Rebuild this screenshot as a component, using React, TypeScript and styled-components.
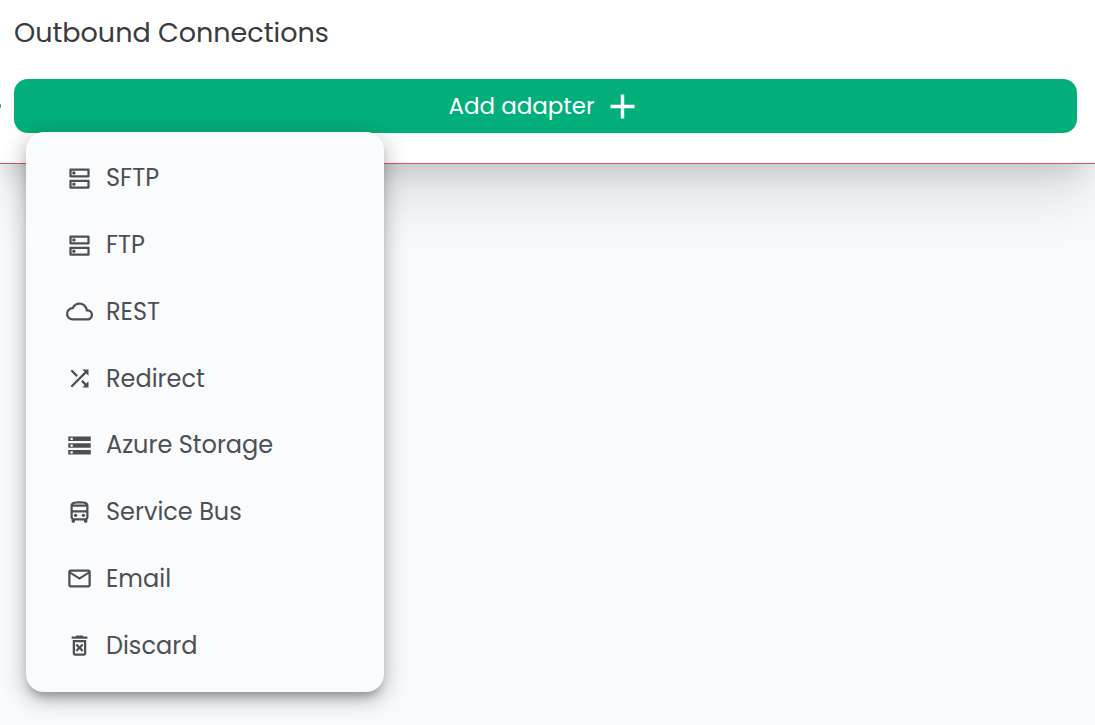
import React from 'react';
import styled, { createGlobalStyle } from 'styled-components';
import {
  MdAdd,
  MdOutlineCloud,
  MdOutlineDeleteForever,
  MdOutlineDirectionsBus,
  MdOutlineDns,
  MdOutlineMail,
  MdShuffle,
  MdStorage,
} from 'react-icons/md';
import type { IconType } from 'react-icons';

const GlobalStyle = createGlobalStyle`
  * { box-sizing: border-box; }
  body {
    margin: 0;
    background: #f8fafc;
    color: #383c40;
    font-family: Poppins, Inter, sans-serif;
    overflow-x: hidden;
  }
`;

const Page = styled.main`
  min-height: 100vh;
`;

const Panel = styled.section`
  position: relative;
  padding: 13px 18px 30px 14px;
  background: #fff;
  border-bottom: 1px solid #dc5a60;
  box-shadow: 0 14px 26px -8px rgba(0, 0, 0, 0.14), 0 40px 60px -6px rgba(0, 0, 0, 0.11);
`;

const Connector = styled.span`
  position: absolute;
  left: -5px;
  top: 103px;
  width: 6px;
  height: 6px;
  border-radius: 50%;
  background: #00a078;
`;

const Title = styled.h1`
  margin: 0 0 26px;
  font-size: 27px;
  line-height: 40px;
  font-weight: 400;
`;

const Dropdown = styled.div`
  position: relative;
`;

const AddButton = styled.button`
  display: flex;
  align-items: center;
  justify-content: center;
  gap: 7px;
  width: 100%;
  height: 54px;
  padding: 0;
  border: 0;
  border-radius: 14px;
  background: #02af7b;
  color: #fff;
  font: inherit;
  font-size: 23px;
  line-height: 36px;
  cursor: pointer;
`;

const Menu = styled.div`
  position: absolute;
  top: 53px;
  left: 12px;
  z-index: 1;
  display: grid;
  grid-auto-rows: 1fr;
  width: 358px;
  height: 560px;
  padding: 13px 0;
  border-radius: 18px;
  background: #f9fbfd;
  box-shadow: 0 8px 10px -4px rgba(0, 0, 0, 0.28), 0 6px 22px 2px rgba(0, 0, 0, 0.25);
`;

const MenuItem = styled.button`
  display: flex;
  align-items: center;
  gap: 13px;
  padding: 0 40px;
  border: 0;
  background: transparent;
  color: #4c5054;
  font: inherit;
  font-size: 24px;
  line-height: 36px;
  text-align: left;
  cursor: pointer;
`;

const adapters: { label: string; icon: IconType }[] = [
  { label: 'SFTP', icon: MdOutlineDns },
  { label: 'FTP', icon: MdOutlineDns },
  { label: 'REST', icon: MdOutlineCloud },
  { label: 'Redirect', icon: MdShuffle },
  { label: 'Azure Storage', icon: MdStorage },
  { label: 'Service Bus', icon: MdOutlineDirectionsBus },
  { label: 'Email', icon: MdOutlineMail },
  { label: 'Discard', icon: MdOutlineDeleteForever },
];

export default function App() {
  return (
    <Page>
      <GlobalStyle />
      <Panel>
        <Connector />
        <Title>Outbound Connections</Title>
        <Dropdown>
          <AddButton type="button" aria-haspopup="menu" aria-expanded="true">
            Add adapter
            <MdAdd size={41} aria-hidden />
          </AddButton>
          <Menu role="menu">
            {adapters.map(({ label, icon: Icon }) => (
              <MenuItem key={label} type="button" role="menuitem">
                <Icon size={27} aria-hidden />
                {label}
              </MenuItem>
            ))}
          </Menu>
        </Dropdown>
      </Panel>
    </Page>
  );
}
